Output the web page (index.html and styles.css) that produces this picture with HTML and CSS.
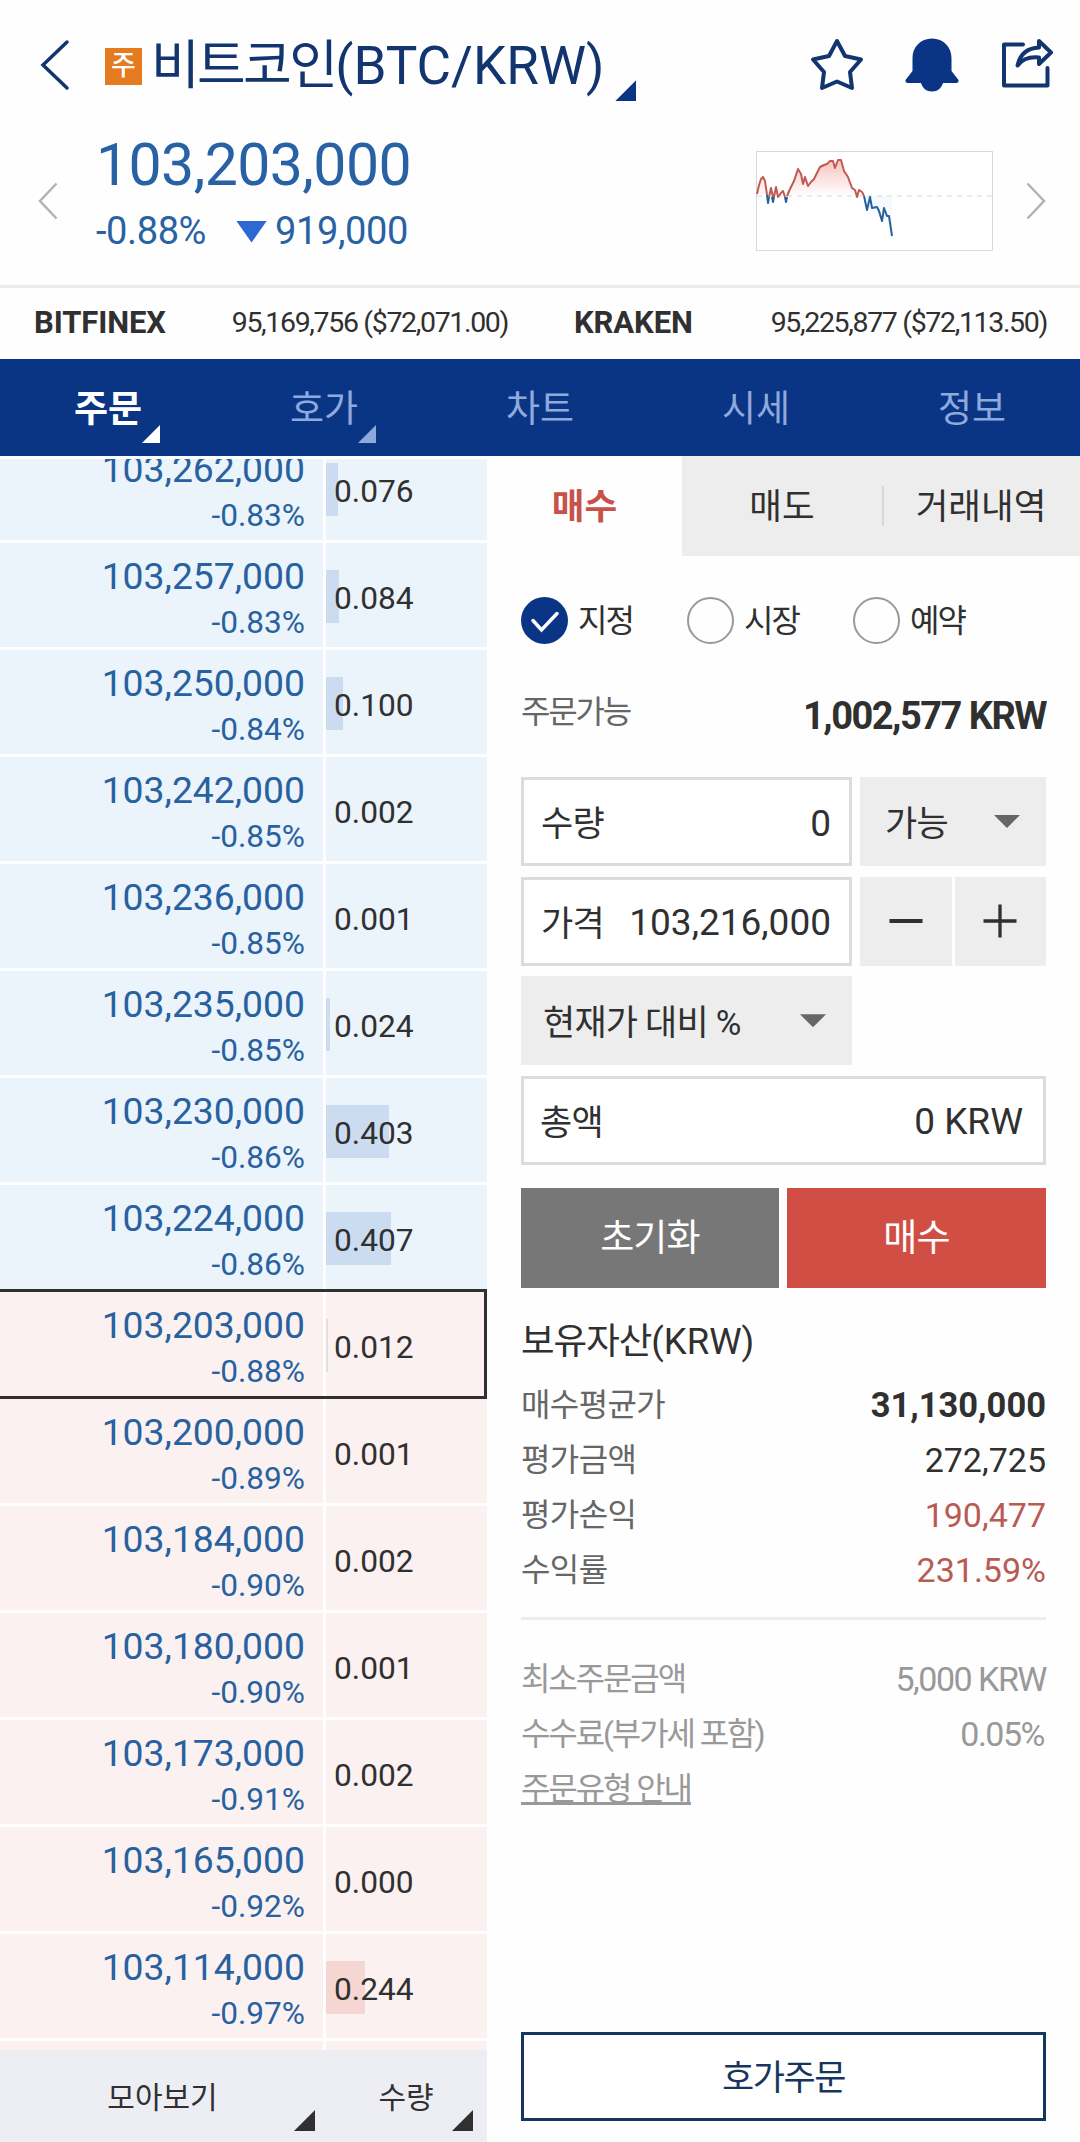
FILE: index.html
```html
<!DOCTYPE html>
<html lang="ko">
  <head>
    <meta charset="utf-8" />
    <meta name="viewport" content="width=device-width, initial-scale=1" />
    <title>비트코인(BTC/KRW)</title>
    <link rel="stylesheet" href="styles.css">
  </head>
  <body>
    <header class="topbar">
      <svg class="back" width="30" height="52" viewBox="0 0 30 52"><path d="M27 3 L3 26 L27 49" /></svg>
      <span class="badge">주</span>
      <h1 class="title"><span class="title-ko">비트코인</span>(BTC/KRW)</h1>
      <i class="corner corner-title"></i>
      <div class="actions">
        <svg width="54" height="54" viewBox="0 0 54 54"><path class="line" d="M27 3 L35 18 L51 21.5 L40 34 L42 50 L27 43.500 L12 50 L14 34 L3 21.500 L19 18 Z" /></svg>
        <svg width="54" height="54" viewBox="0 0 54 54"><path class="fill" d="M27 .5 C38.500 .5 46.500 9 46.500 20 V33 L53.500 42 Q54 45 51 45 H38 C36.500 50 32.500 53.500 27 53.500 C21.500 53.500 17.500 50 16 45 H3 Q0 45 .5 42 L7.500 33 V20 C7.500 9 15.500 .5 27 .5 Z" /></svg>
        <svg width="54" height="54" viewBox="0 0 54 54"><path class="line" d="M23 6.500 H4 V47.500 H47.500 V30" /><path class="line" d="M39 3 L51 14.500 L39 26 V19.500 C29 18.500 22 21.500 17.500 27.500 C20 16.500 27 10 39 9.500 Z" /></svg>
      </div>
    </header>

    <section class="quote">
      <svg class="arrow" width="20" height="38" viewBox="0 0 20 38"><path d="M18.500 1.500 L2 19 L18.500 36.500" /></svg>
      <div class="quote-text">
        <div class="price">103,203,000</div>
        <div class="change"><span>-0.88%</span><i class="down"></i><span>919,000</span></div>
      </div>
      <svg class="chart" width="237" height="100" viewBox="0 0 237 100">
        <defs>
          <linearGradient id="up" x1="0" y1="0" x2="0" y2="1">
            <stop offset="0" stop-color="#f6c3be" />
            <stop offset="1" stop-color="#fff" />
          </linearGradient>
        </defs>
        <rect x=".5" y=".5" width="236" height="99" fill="#fff" stroke="#d8d8d8" />
        <path fill="url(#up)" d="M1 45 L3 34 L7 26 L10 45 Z M29 45 L38 30 L42 18 L47 33 L49 27 L52 35 L58 28 L64 16 L72 13 L76 10 L79 16 L84 9 L88 20 L92 26 L96 37 L100 40 L102 45 Z" />
        <path fill="#f6fafe" d="M108 45 H136 V84 L133 65 L126 68 L111 58 Z" />
        <path d="M1 45 H236" stroke="#e4e4e4" stroke-width="1.500" stroke-dasharray="5 5" />
        <path class="rise" d="M1 43 L3 34 L5 28 L7 26 L9 30 L11 44 M13 46 L15 37 L17 46 M18 46 L20 36 L22 46 L25 42 L27 40 L29 46 M31 45 L34 38 L38 30 L42 18 L45 23 L47 33 L49 26 L52 35 L55 31 L58 28 L64 16 L68 14 L71 13 L74 10 L77 10 L79 17 L82 9 L85 9 L88 20 L92 26 L96 37 L99 39 L101 46 L103 39 L106 41 L108 45" />
        <path class="fall" d="M11 44 L12 52 L13 46 M16 46 L17 51 L18 46 M29 46 L30 51 L31 46 M108 45 L111 59 L114 46 L116 57 L121 56 L123 60 L126 70 L128 57 L131 65 L133 65 L136 85" />
      </svg>
      <svg class="arrow" width="20" height="38" viewBox="0 0 20 38"><path d="M1.500 1.500 L18 19 L1.500 36.500" /></svg>
    </section>

    <section class="exchanges">
      <b>BITFINEX</b><span>95,169,756 ($72,071.00)</span>
      <b class="second">KRAKEN</b><span>95,225,877 ($72,113.50)</span>
    </section>

    <nav class="tabs">
      <a class="tab active">주문<i class="corner"></i></a>
      <a class="tab">호가<i class="corner"></i></a>
      <a class="tab">차트</a>
      <a class="tab">시세</a>
      <a class="tab">정보</a>
    </nav>

    <main class="main">
      <section class="book">
        <div class="rows">
          <div class="row ask"><div class="cell"><b>103,262,000</b><em>-0.83%</em></div><div class="qty"><i style="width: 12px"></i><span>0.076</span></div></div>
          <div class="row ask"><div class="cell"><b>103,257,000</b><em>-0.83%</em></div><div class="qty"><i style="width: 13px"></i><span>0.084</span></div></div>
          <div class="row ask"><div class="cell"><b>103,250,000</b><em>-0.84%</em></div><div class="qty"><i style="width: 17px"></i><span>0.100</span></div></div>
          <div class="row ask"><div class="cell"><b>103,242,000</b><em>-0.85%</em></div><div class="qty"><span>0.002</span></div></div>
          <div class="row ask"><div class="cell"><b>103,236,000</b><em>-0.85%</em></div><div class="qty"><span>0.001</span></div></div>
          <div class="row ask"><div class="cell"><b>103,235,000</b><em>-0.85%</em></div><div class="qty"><i style="width: 4px"></i><span>0.024</span></div></div>
          <div class="row ask"><div class="cell"><b>103,230,000</b><em>-0.86%</em></div><div class="qty"><i style="width: 63px"></i><span>0.403</span></div></div>
          <div class="row ask"><div class="cell"><b>103,224,000</b><em>-0.86%</em></div><div class="qty"><i style="width: 65px"></i><span>0.407</span></div></div>
          <div class="row bid current"><div class="cell"><b>103,203,000</b><em>-0.88%</em></div><div class="qty"><i style="width: 2px"></i><span>0.012</span></div></div>
          <div class="row bid"><div class="cell"><b>103,200,000</b><em>-0.89%</em></div><div class="qty"><span>0.001</span></div></div>
          <div class="row bid"><div class="cell"><b>103,184,000</b><em>-0.90%</em></div><div class="qty"><span>0.002</span></div></div>
          <div class="row bid"><div class="cell"><b>103,180,000</b><em>-0.90%</em></div><div class="qty"><span>0.001</span></div></div>
          <div class="row bid"><div class="cell"><b>103,173,000</b><em>-0.91%</em></div><div class="qty"><span>0.002</span></div></div>
          <div class="row bid"><div class="cell"><b>103,165,000</b><em>-0.92%</em></div><div class="qty"><span>0.000</span></div></div>
          <div class="row bid"><div class="cell"><b>103,114,000</b><em>-0.97%</em></div><div class="qty"><i style="width: 39px"></i><span>0.244</span></div></div>
          <div class="row bid"><div class="cell"></div><div class="qty"></div></div>
        </div>
        <div class="book-footer">
          <div class="group">모아보기<i class="corner"></i></div>
          <div class="unit">수량<i class="corner"></i></div>
        </div>
      </section>

      <section class="order">
        <div class="order-tabs">
          <a class="order-tab selected">매수</a>
          <a class="order-tab sell">매도</a>
          <a class="order-tab history">거래내역</a>
        </div>

        <div class="form">
          <div class="types">
            <label class="type"><svg width="47" height="47" viewBox="0 0 47 47"><circle cx="23.500" cy="23.500" r="23.500" fill="#0a3585" /><path d="M12 23.500 L20.500 33 L36 16.500" fill="none" stroke="#fff" stroke-width="3.500" stroke-linecap="round" /></svg>지정</label>
            <label class="type"><i class="radio"></i>시장</label>
            <label class="type"><i class="radio"></i>예약</label>
          </div>

          <div class="available"><span>주문가능</span><b>1,002,577 KRW</b></div>

          <div class="fields">
            <div class="field"><label>수량</label><span>0</span></div>
            <div class="select"><label>가능</label><i class="caret"></i></div>
          </div>
          <div class="fields">
            <div class="field"><label>가격</label><span>103,216,000</span></div>
            <div class="steps">
              <div class="step"><svg width="34" height="34" viewBox="0 0 34 34"><path d="M.5 17 H33.500" stroke-width="4" /></svg></div>
              <div class="step"><svg width="34" height="34" viewBox="0 0 34 34"><path d="M.5 17 H33.500 M17 .5 V33.500" stroke-width="3.300" /></svg></div>
            </div>
          </div>
          <div class="fields">
            <div class="select ratio"><label>현재가 대비 %</label><i class="caret"></i></div>
          </div>
          <div class="fields">
            <div class="field total"><label>총액</label><span>0 KRW</span></div>
          </div>

          <div class="buttons">
            <div class="button reset">초기화</div>
            <div class="button buy">매수</div>
          </div>

          <h2 class="assets-title"><span>보유자산</span>(KRW)</h2>
          <dl class="list">
            <div><dt>매수평균가</dt><dd class="bold">31,130,000</dd></div>
            <div><dt>평가금액</dt><dd>272,725</dd></div>
            <div><dt>평가손익</dt><dd class="plus">190,477</dd></div>
            <div><dt>수익률</dt><dd class="plus">231.59%</dd></div>
          </dl>
          <dl class="list notes">
            <div><dt>최소주문금액</dt><dd>5,000 KRW</dd></div>
            <div><dt>수수료(부가세 포함)</dt><dd class="fee">0.05%</dd></div>
            <div><dt><u>주문유형 안내</u></dt></div>
          </dl>

          <div class="book-order">호가주문</div>
        </div>
      </section>
    </main>
  </body>
</html>
```

FILE: styles.css
```css
* {
  box-sizing: border-box;
  margin: 0;
  padding: 0;
}

body {
  width: 1080px;
  height: 2142px;
  overflow: hidden;
  font-family: Roboto, "Noto Sans CJK KR", sans-serif;
  background-color: #fefefe;
  color: #303030;
  display: flex;
  flex-direction: column;
}

svg {
  display: block;
  flex: none;
}

b,
em,
i {
  font-style: normal;
}

.corner {
  width: 18px;
  height: 18px;
  background: currentColor;
  clip-path: polygon(100% 0, 100% 100%, 0 100%);
}

/* header */
.topbar {
  height: 130px;
  padding: 0 26px 0 40px;
  display: flex;
  align-items: center;
  color: #12356f;
}

.back path {
  fill: none;
  stroke: #12356f;
  stroke-width: 3.5;
  stroke-linecap: round;
}

.badge {
  width: 37px;
  height: 37px;
  margin: 3px 9px 0 35px;
  background: #e57a1f;
  color: #fff;
  font-size: 27px;
  font-weight: 500;
  line-height: 37px;
  text-align: center;
}

.title {
  padding-top: 1px;
  font-size: 53px;
  font-weight: 400;
  line-height: 60px;
  white-space: nowrap;
}

.title-ko {
  letter-spacing: -2.7px;
}

.corner-title {
  width: 21px;
  height: 21px;
  margin: 51px 0 0 11px;
  color: #0a3585;
}

.actions {
  margin-left: auto;
  display: flex;
  gap: 41px;
}

.actions .line {
  fill: none;
  stroke: #12356f;
  stroke-width: 4;
  stroke-linejoin: round;
  stroke-linecap: round;
}

.actions .fill {
  fill: #0a3585;
}

.quote {
  height: 158px;
  padding: 0 34px 14px 38px;
  border-bottom: 3px solid #ececec;
  display: flex;
  align-items: center;
  color: #2862a5;
}

.arrow path {
  fill: none;
  stroke: #b3b3b3;
  stroke-width: 2.5;
}

.quote-text {
  margin-left: 38px;
}

.price {
  font-size: 59px;
  line-height: 61px;
  letter-spacing: -0.6px;
}

.change {
  padding-top: 1px;
  display: flex;
  align-items: center;
  font-size: 38px;
  line-height: 71px;
  letter-spacing: -0.4px;
}

.down {
  width: 31px;
  height: 22px;
  margin: 0 8px 0 30px;
  background: #2e68d2;
  clip-path: polygon(0 0, 100% 0, 50% 100%);
}

.chart {
  margin-left: auto;
  margin-right: 33px;
}

.rise,
.fall {
  fill: none;
  stroke: #c05a52;
  stroke-width: 2;
  stroke-linejoin: round;
}

.fall {
  stroke: #24629d;
}

/* exchange prices */
.exchanges {
  height: 71px;
  padding: 0 33px 3px 34px;
  display: flex;
  align-items: center;
  justify-content: space-between;
  font-size: 28.5px;
  letter-spacing: -1.35px;
}

.exchanges b {
  font-size: 31px;
  letter-spacing: -0.1px;
}

.exchanges .second {
  margin-right: 12px;
}

.tabs {
  height: 97px;
  background: #0a3585;
  display: grid;
  grid-template-columns: repeat(5, 1fr);
}

.tab {
  position: relative;
  height: 97px;
  font-size: 37px;
  line-height: 101px;
  text-align: center;
  color: #8fa9dc;
}

.tab.active {
  color: #fff;
  font-weight: 700;
}

.tab .corner {
  position: absolute;
  right: 56px;
  bottom: 13px;
}

/* order book */
.main {
  flex: 1;
  min-height: 0;
  display: flex;
}

.book {
  width: 487px;
  padding-top: 3px;
  display: flex;
  flex-direction: column;
}

.rows {
  flex: 1;
  min-height: 0;
  overflow: hidden;
}

.row {
  height: 104px;
  margin-bottom: 3px;
  display: flex;
  gap: 3px;
}

.row:first-child {
  margin-top: -23px;
}

.cell,
.qty {
  background: #ebf3fb;
}

.cell {
  width: 323px;
  padding: 11px 18px 0 0;
  text-align: right;
  color: #28619f;
}

.cell b {
  display: block;
  font-size: 37.3px;
  font-weight: 400;
  line-height: 45px;
}

.cell em {
  display: block;
  font-size: 31.6px;
  line-height: 48px;
}

.qty {
  flex: 1;
  position: relative;
  padding: 5px 0 0 8px;
  font-size: 31.7px;
  line-height: 99px;
}

.qty i {
  position: absolute;
  left: 0;
  top: 27px;
  height: 53px;
  background: #ccdcf0;
}

.qty span {
  position: relative;
  top: 1px;
}

.bid .cell,
.bid .qty {
  background: #fbf1f0;
}

.bid .qty i {
  background: #f5d6d3;
}

.current {
  outline: 3px solid #303030;
  position: relative;
}

.rows .current {
  margin-left: -3px;
  margin-right: 3px;
  padding-left: 3px;
}

.rows .current .qty i {
  background: #e6dedd;
}

.book-footer {
  height: 92px;
  background: #edeef4;
  display: flex;
  font-size: 30px;
  line-height: 95px;
}

.group {
  width: 325px;
  text-align: center;
}

.unit {
  flex: 1;
  text-align: center;
}

.book-footer div {
  position: relative;
}

.book-footer .corner {
  position: absolute;
  right: 10px;
  bottom: 11px;
  width: 21px;
  height: 21px;
}

.book-footer .unit .corner {
  right: 14px;
}

/* order form */
.order {
  flex: 1;
  display: flex;
  flex-direction: column;
}

.order-tabs {
  height: 100px;
  display: flex;
  font-size: 35.5px;
  line-height: 103px;
  text-align: center;
}

.order-tab {
  height: 100px;
  background: #ededed;
}

.order-tab.selected {
  width: 195px;
  background: none;
  color: #c8524a;
  font-weight: 700;
}

.order-tab.sell {
  width: 200px;
}

.order-tab.history {
  flex: 1;
  background-image: linear-gradient(#d8d8d8, #d8d8d8);
  background-size: 2px 40px;
  background-repeat: no-repeat;
  background-position: left 50%;
}

.form {
  flex: 1;
  padding: 42px 34px 21px;
  display: flex;
  flex-direction: column;
}

.types {
  height: 47px;
  display: flex;
}

.type {
  width: 166px;
  display: flex;
  align-items: center;
  gap: 10px;
  font-size: 32px;
  line-height: 49px;
  letter-spacing: -2px;
}

.type svg,
.radio {
  margin-bottom: 2px;
}

.radio {
  width: 47px;
  height: 47px;
  border: 2px solid #999;
  border-radius: 50%;
}

.available {
  height: 132px;
  padding-top: 43px;
  display: flex;
  justify-content: space-between;
  font-size: 32px;
  line-height: 48px;
}

.available span {
  letter-spacing: -2.2px;
  color: #666;
}

.available b {
  margin-top: 4px;
  font-size: 38px;
  letter-spacing: -1.5px;
}

.fields {
  height: 89px;
  margin-bottom: 10.67px;
  display: flex;
  gap: 8px;
  font-size: 35px;
}

.field {
  width: 331px;
  padding: 0 18px 0 17px;
  border: 3px solid #dcdcdc;
  background: #fff;
  display: flex;
  align-items: center;
  justify-content: space-between;
}

.field label,
.select label {
  padding-bottom: 2px;
  letter-spacing: -0.8px;
}

.field span {
  padding-top: 3px;
  font-size: 37px;
}

.total {
  width: 100%;
  padding-right: 20px;
}

.total label {
  margin-left: -1px;
}

.select {
  flex: 1;
  padding: 0 26px 0 25px;
  background: #ededed;
  display: flex;
  align-items: center;
  justify-content: space-between;
}

.ratio {
  flex: none;
  width: 331px;
  padding: 0 26px 0 22px;
}

.caret {
  width: 26px;
  height: 13px;
  background: #666;
  clip-path: polygon(0 0, 100% 0, 50% 100%);
}

.steps {
  flex: 1;
  display: flex;
  gap: 3px;
}

.step {
  flex: 1;
  background: #ededed;
  display: flex;
  align-items: center;
  justify-content: center;
}

.step path {
  stroke: #303030;
}

.buttons {
  margin-top: 12px;
  height: 100px;
  display: flex;
  gap: 8px;
}

.button {
  flex: 1;
  background: #777;
  color: #fff;
  font-size: 37px;
  line-height: 102px;
  letter-spacing: -0.8px;
  text-align: center;
}

.reset {
  flex: none;
  width: 258px;
}

.buy {
  background: #d14e45;
}

.assets-title {
  margin-top: 30px;
  font-size: 36.5px;
  font-weight: 400;
  line-height: 48px;
}

.assets-title span {
  letter-spacing: -1px;
}

.list {
  margin-top: 11px;
  padding-bottom: 20px;
  border-bottom: 3px solid #ececec;
}

.list div {
  height: 55px;
  display: flex;
  justify-content: space-between;
  font-size: 32px;
  line-height: 56px;
}

.list dt {
  color: #666;
  letter-spacing: -0.6px;
}

.list dd {
  font-size: 34px;
}

.list .bold {
  font-size: 34.5px;
  font-weight: 700;
}

.list .plus {
  color: #b95a53;
}

.notes {
  margin-top: 31px;
  border: 0;
}

.notes dt,
.notes dd {
  color: #999;
  letter-spacing: -2.1px;
}

.notes dd {
  letter-spacing: -1.5px;
}

.notes .fee {
  padding-right: 2px;
}

.book-order {
  height: 89px;
  margin-top: auto;
  border: 3px solid #17365d;
  color: #17365d;
  background: #fff;
  font-size: 35px;
  line-height: 87px;
  letter-spacing: -1.5px;
  text-align: center;
}
```
